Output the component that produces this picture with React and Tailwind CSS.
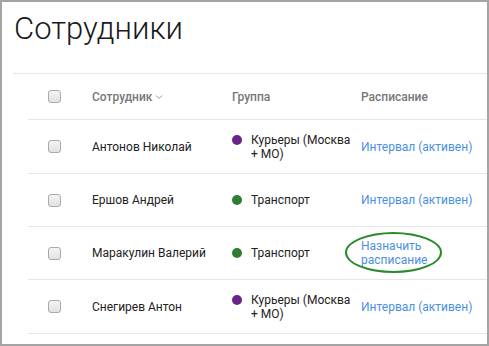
const employees = [
  { name: 'Антонов Николай', group: 'Курьеры (Москва +\u00a0МО)', dot: 'bg-[#6a2291]', schedule: 'Интервал (активен)', tall: true },
  { name: 'Ершов Андрей', group: 'Транспорт', dot: 'bg-[#2e7d32]', schedule: 'Интервал (активен)' },
  { name: 'Маракулин Валерий', group: 'Транспорт', dot: 'bg-[#2e7d32]', schedule: null },
  { name: 'Снегирев Антон', group: 'Курьеры (Москва +\u00a0МО)', dot: 'bg-[#6a2291]', schedule: 'Интервал (активен)', tall: true },
]

function Checkbox() {
  return <div className="h-[13px] w-[13px] rounded-[3px] border border-[#a9a9a9] bg-gradient-to-b from-[#f4f4f4] to-[#e2e2e2]" />
}

export default function App() {
  return (
    <div className="h-[346px] w-[489px] overflow-hidden border-2 border-[#a4a4a4] bg-white font-['Roboto',sans-serif] text-[12px] text-[#222]">
      <div className="pl-[11px] pt-[7px]">
        <h1 className="h-[40px] pl-[1px] text-[31px] font-light leading-[40px] text-[#1a1a1a]">Сотрудники</h1>
        <div className="mt-[24px] border-t border-[#e6e6e6]">
          <div className="ml-[15px]">
            <div className="flex h-[46px] items-center border-b border-[#e6e6e6] font-medium text-[#777]">
              <div className="w-[64px] pl-[20px]"><Checkbox /></div>
              <div className="flex w-[140px] items-center gap-[3px]">
                Сотрудник
                <svg width="8" height="6" viewBox="0 0 8 6" className="mt-[1px]">
                  <polyline points="1,1.5 4,4.5 7,1.5" fill="none" stroke="#999" strokeWidth="1" />
                </svg>
              </div>
              <div className="w-[129px]">Группа</div>
              <div className="flex-1">Расписание</div>
            </div>
            {employees.map((e) => (
              <div key={e.name} className={`flex items-center border-b border-[#e6e6e6] ${e.tall ? 'h-[54px]' : 'h-[53px]'}`}>
                <div className="w-[64px] pl-[20px]"><Checkbox /></div>
                <div className="w-[140px]">{e.name}</div>
                <div className="flex w-[129px] items-start gap-[9px] leading-[14px]">
                  <span className={`mt-[2px] h-[10px] w-[10px] shrink-0 rounded-full ${e.dot}`} />
                  <span className="max-w-[104px]">{e.group}</span>
                </div>
                <div className="flex-1 leading-[14px] text-[#4a90e2]">
                  {e.schedule ? (
                    e.schedule
                  ) : (
                    <span className="relative inline-block">
                      Назначить<br />расписание
                      <span className="absolute -bottom-[6px] -left-[16px] -right-[15px] -top-[7px] rounded-[50%] border-2 border-[#2b8a2b]" />
                    </span>
                  )}
                </div>
              </div>
            ))}
          </div>
        </div>
      </div>
    </div>
  )
}
